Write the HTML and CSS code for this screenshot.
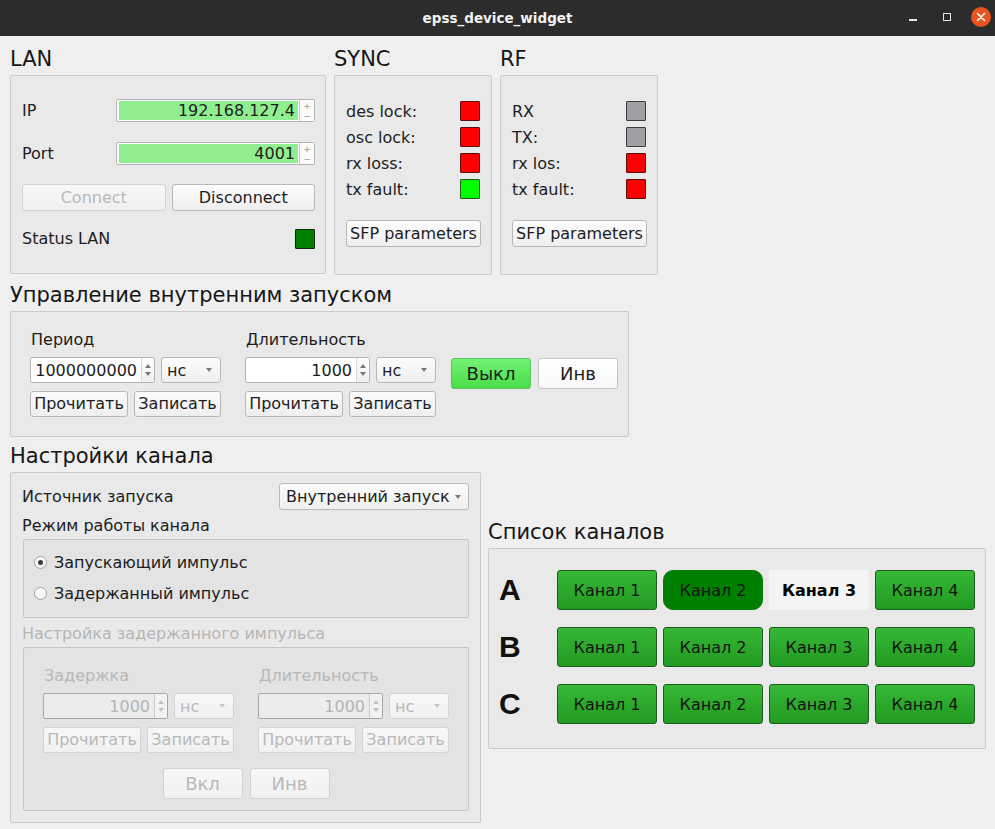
FILE: index.html
```html
<!DOCTYPE html>
<html lang="ru">
<head>
<meta charset="utf-8">
<title>epss_device_widget</title>
<link rel="stylesheet" href="styles.css">
</head>
<body>
<div class="window">
  <header class="titlebar">
    <span class="title">epss_device_widget</span>
    <div class="wm">
      <span class="wm-min"></span>
      <span class="wm-max"></span>
      <span class="wm-close"><svg width="10" height="10" viewBox="0 0 10 10"><path d="M1.5 1.5 L8.5 8.5 M8.5 1.5 L1.5 8.5" stroke="#fff" stroke-width="1.6" stroke-linecap="round"/></svg></span>
    </div>
  </header>

  <main class="main">
    <div class="top-row">
      <section class="lan-col">
        <h2 class="gtitle">LAN</h2>
        <div class="gbox lan-box">
          <div class="lan-row">
            <span class="lan-lbl">IP</span>
            <div class="spin green lan-spin">
              <span class="spin-val">192.168.127.4</span>
              <span class="pm"><span>+</span><span>−</span></span>
            </div>
          </div>
          <div class="lan-row port-row">
            <span class="lan-lbl">Port</span>
            <div class="spin green lan-spin">
              <span class="spin-val">4001</span>
              <span class="pm"><span>+</span><span>−</span></span>
            </div>
          </div>
          <div class="lan-btns">
            <button class="btn disabled lan-btn">Connect</button>
            <button class="btn lan-btn">Disconnect</button>
          </div>
          <div class="status-row">
            <span>Status LAN</span>
            <span class="ind dkgreen"></span>
          </div>
        </div>
      </section>

      <section class="sfp-col">
        <h2 class="gtitle">SYNC</h2>
        <div class="gbox sfp-box">
          <div class="ind-row"><span>des lock:</span><span class="ind red"></span></div>
          <div class="ind-row"><span>osc lock:</span><span class="ind red"></span></div>
          <div class="ind-row"><span>rx loss:</span><span class="ind red"></span></div>
          <div class="ind-row"><span>tx fault:</span><span class="ind lime"></span></div>
          <button class="btn sfp-btn">SFP parameters</button>
        </div>
      </section>

      <section class="sfp-col">
        <h2 class="gtitle">RF</h2>
        <div class="gbox sfp-box">
          <div class="ind-row"><span>RX</span><span class="ind gray"></span></div>
          <div class="ind-row"><span>TX:</span><span class="ind gray"></span></div>
          <div class="ind-row"><span>rx los:</span><span class="ind red"></span></div>
          <div class="ind-row"><span>tx fault:</span><span class="ind red"></span></div>
          <button class="btn sfp-btn">SFP parameters</button>
        </div>
      </section>
    </div>

    <section class="ctrl">
      <h2 class="gtitle">Управление внутренним запуском</h2>
      <div class="gbox ctrl-box">
        <div class="field">
          <div class="flabel">Период</div>
          <div class="frow">
            <div class="spin num-spin">
              <span class="spin-val">1000000000</span>
              <span class="arrows"><i class="up"></i><i class="down"></i></span>
            </div>
            <div class="combo unit"><span>нс</span><i class="caret"></i></div>
          </div>
          <div class="frow brow">
            <button class="btn b-read">Прочитать</button>
            <button class="btn b-write">Записать</button>
          </div>
        </div>
        <div class="field">
          <div class="flabel">Длительность</div>
          <div class="frow">
            <div class="spin num-spin">
              <span class="spin-val">1000</span>
              <span class="arrows"><i class="up"></i><i class="down"></i></span>
            </div>
            <div class="combo unit"><span>нс</span><i class="caret"></i></div>
          </div>
          <div class="frow brow">
            <button class="btn b-read">Прочитать</button>
            <button class="btn b-write">Записать</button>
          </div>
        </div>
        <div class="toggles">
          <button class="btn big on-green">Выкл</button>
          <button class="btn big white">Инв</button>
        </div>
      </div>
    </section>

    <div class="bottom-row">
      <section class="settings">
        <h2 class="gtitle">Настройки канала</h2>
        <div class="gbox settings-box">
          <div class="src-row">
            <span>Источник запуска</span>
            <div class="combo src-combo"><span>Внутренний запуск</span><i class="caret"></i></div>
          </div>
          <div class="sub-lbl">Режим работы канала</div>
          <div class="gbox mode-box">
            <div class="radio"><span class="rdot on"></span>Запускающий импульс</div>
            <div class="radio"><span class="rdot"></span>Задержанный импульс</div>
          </div>
          <div class="sub-lbl dis-text">Настройка задержанного импульса</div>
          <div class="gbox delay-box">
            <div class="delay-fields">
              <div class="field dis">
                <div class="flabel">Задержка</div>
                <div class="frow">
                  <div class="spin num-spin">
                    <span class="spin-val">1000</span>
                    <span class="arrows"><i class="up"></i><i class="down"></i></span>
                  </div>
                  <div class="combo unit"><span>нс</span><i class="caret"></i></div>
                </div>
                <div class="frow brow">
                  <button class="btn b-read">Прочитать</button>
                  <button class="btn b-write">Записать</button>
                </div>
              </div>
              <div class="field dis">
                <div class="flabel">Длительность</div>
                <div class="frow">
                  <div class="spin num-spin">
                    <span class="spin-val">1000</span>
                    <span class="arrows"><i class="up"></i><i class="down"></i></span>
                  </div>
                  <div class="combo unit"><span>нс</span><i class="caret"></i></div>
                </div>
                <div class="frow brow">
                  <button class="btn b-read">Прочитать</button>
                  <button class="btn b-write">Записать</button>
                </div>
              </div>
            </div>
            <div class="delay-toggles">
              <button class="btn big disabled">Вкл</button>
              <button class="btn big disabled">Инв</button>
            </div>
          </div>
        </div>
      </section>

      <section class="channels">
        <h2 class="gtitle">Список каналов</h2>
        <div class="gbox ch-box">
          <div class="ch-row">
            <span class="ch-letter">A</span>
            <button class="ch-btn">Канал 1</button>
            <button class="ch-btn active">Канал 2</button>
            <button class="ch-btn selected">Канал 3</button>
            <button class="ch-btn">Канал 4</button>
          </div>
          <div class="ch-row">
            <span class="ch-letter">B</span>
            <button class="ch-btn">Канал 1</button>
            <button class="ch-btn">Канал 2</button>
            <button class="ch-btn">Канал 3</button>
            <button class="ch-btn">Канал 4</button>
          </div>
          <div class="ch-row">
            <span class="ch-letter">C</span>
            <button class="ch-btn">Канал 1</button>
            <button class="ch-btn">Канал 2</button>
            <button class="ch-btn">Канал 3</button>
            <button class="ch-btn">Канал 4</button>
          </div>
        </div>
      </section>
    </div>
  </main>
</div>
</body>
</html>
```

FILE: styles.css
```css
* { box-sizing: border-box; }

html, body {
  margin: 0;
  padding: 0;
}

body {
  background: #efefef;
  font-family: "DejaVu Sans", "Noto Sans", sans-serif;
  font-size: 16px;
  color: #1d1d1d;
}

.window {
  width: 995px;
  height: 829px;
  overflow: hidden;
}

/* ---------- generic controls ---------- */
.btn {
  font-family: inherit;
  font-size: 16px;
  color: #1d1d1d;
  background: linear-gradient(#fcfcfc, #eeeeee);
  border: 1px solid #b8b8b8;
  border-radius: 3px;
  padding: 0;
  margin: 0;
  height: 26px;
  line-height: 1;
}

.btn.disabled,
.dis .btn {
  color: #b9b9b9;
  border-color: #d3d3d3;
  background: linear-gradient(#f7f7f7, #f0f0f0);
}

.spin {
  display: flex;
  height: 26px;
  border: 1px solid #b5b5b5;
  border-radius: 2px;
  background: #fff;
  overflow: hidden;
}

.spin-val {
  flex: 1;
  text-align: right;
  padding-right: 4px;
  display: flex;
  align-items: center;
  justify-content: flex-end;
}

.spin.green .spin-val {
  background: #90ee90;
  margin: 1px 1px 1px 2px;
  padding-right: 3px;
}

.pm {
  width: 15px;
  display: flex;
  flex-direction: column;
  border-left: 1px solid #c8c8c8;
  background: #fbfbfb;
  font-size: 9px;
  color: #9a9a9a;
  line-height: 10px;
  text-align: center;
  justify-content: center;
}

.arrows {
  width: 13px;
  display: flex;
  flex-direction: column;
  align-items: center;
  justify-content: center;
  gap: 4px;
  border-left: 1px solid #d8d8d8;
  background: linear-gradient(#fdfdfd, #f0f0f0);
}

.arrows .up {
  width: 0;
  height: 0;
  border-left: 3px solid transparent;
  border-right: 3px solid transparent;
  border-bottom: 4px solid #767676;
}

.arrows .down {
  width: 0;
  height: 0;
  border-left: 3px solid transparent;
  border-right: 3px solid transparent;
  border-top: 4px solid #767676;
}

.combo {
  height: 26px;
  display: flex;
  align-items: center;
  justify-content: space-between;
  border: 1px solid #b9b9b9;
  border-radius: 3px;
  background: linear-gradient(#fcfcfc, #efefef);
  padding: 0 8px 0 5px;
}

.caret {
  width: 0;
  height: 0;
  border-left: 3.5px solid transparent;
  border-right: 3.5px solid transparent;
  border-top: 4px solid #7a7a7a;
}

/* ---------- title bar ---------- */
.titlebar {
  height: 36px;
  background: #2c2c2c;
  display: grid;
  grid-template-columns: 1fr auto 1fr;
  align-items: center;
}

.title {
  grid-column: 2;
  color: #f2f2f2;
  font-weight: bold;
  font-size: 13.5px;
}

.wm {
  grid-column: 3;
  justify-self: end;
  display: flex;
  align-items: center;
  height: 36px;
  padding-right: 4px;
}

.wm-min {
  width: 8px;
  height: 1.5px;
  background: #e6e6e6;
  margin-top: 4px;
  margin-right: 26px;
}

.wm-max {
  width: 8px;
  height: 8px;
  border: 1.3px solid #e6e6e6;
  margin-right: 20px;
  margin-top: -2px;
}

.wm-close {
  width: 20px;
  height: 20px;
  border-radius: 50%;
  background: #e95420;
  display: flex;
  align-items: center;
  justify-content: center;
  margin-top: -2px;
}

/* ---------- main layout ---------- */
.main {
  padding: 9px 10px 0 10px;
}

.gtitle {
  margin: 0 0 2px 0;
  font-size: 21px;
  font-weight: normal;
  line-height: 28px;
  color: #161616;
}

.gbox {
  border: 1px solid rgba(0, 0, 0, 0.13);
  border-radius: 2px;
  background: rgba(0, 0, 0, 0.022);
}

.top-row {
  display: flex;
  gap: 8px;
}

/* LAN */
.lan-col { width: 316px; }

.lan-box {
  height: 199px;
  padding: 23px 10px 0 11px;
}

.lan-row {
  display: flex;
  align-items: center;
  height: 23px;
}

.port-row { margin-top: 20px; }

.lan-lbl { width: 94px; }

.lan-spin {
  width: 200px;
  height: 23px;
}

.lan-btns {
  display: flex;
  gap: 6px;
  margin-top: 19px;
}

.btn.lan-btn {
  width: 144px;
  height: 27px;
}

.status-row {
  display: flex;
  justify-content: space-between;
  align-items: center;
  margin-top: 17px;
  height: 21px;
}

/* SYNC / RF */
.sfp-col { width: 158px; }

.sfp-box {
  height: 200px;
  padding: 25px 11px 0 11px;
}

.ind-row {
  display: flex;
  justify-content: space-between;
  align-items: center;
  height: 20px;
  margin-bottom: 6px;
}

.btn.sfp-btn {
  display: block;
  width: 135px;
  height: 27px;
  margin-top: 21px;
  padding: 0;
}

/* indicators */
.ind {
  width: 20px;
  height: 20px;
  border: 1px solid #2e2e2e;
  border-radius: 1px;
  display: inline-block;
}
.ind.red { background: #ff0000; border-color: #5a1010; }
.ind.lime { background: #00ff00; border-color: #1f5a1f; }
.ind.gray { background: #a0a0a4; border-color: #3c3c3c; }
.ind.dkgreen { background: #008000; border-color: #0d2a0d; }

/* ---------- internal launch control ---------- */
.ctrl { margin-top: 6px; width: 619px; }

.ctrl-box {
  display: flex;
  align-items: center;
  padding: 18px 0 19px 19px;
}

.field {
  width: 191px;
  margin-right: 24px;
}

.flabel {
  line-height: 20px;
  height: 20px;
  padding-left: 1px;
}

.frow {
  display: flex;
  gap: 6px;
  margin-top: 7px;
}

.brow { margin-top: 8px; }

.num-spin { width: 125px; }
.unit { width: 60px; }
.b-read { width: 98px; }
.b-write { width: 87px; }

.toggles {
  display: flex;
  gap: 7px;
  margin-left: -9px;
}

.btn.big {
  height: 31px;
  font-size: 18px;
}

.toggles .btn.big { width: 80px; }

.btn.on-green {
  background: linear-gradient(#74f274, #49de49);
  border-color: #5cc25c;
}

.btn.white {
  background: linear-gradient(#ffffff, #f8f8f8);
  border-color: #c6c6c6;
}

/* ---------- channel settings ---------- */
.bottom-row {
  display: flex;
  gap: 7px;
  margin-top: 5px;
}

.settings { width: 471px; }

.settings-box {
  height: 351px;
  padding: 10px 11px 0 11px;
}

.src-row {
  display: flex;
  justify-content: space-between;
  align-items: center;
  height: 27px;
}

.combo.src-combo {
  width: 190px;
  height: 27px;
  padding: 0 7px 0 6px;
}

.sub-lbl {
  line-height: 20px;
  margin-top: 6px;
}

.dis-text { color: #b6b6b6; }

.mode-box {
  margin: 3px 0 0 1px;
  height: 79px;
  padding: 12px 0 0 10px;
}

.radio {
  display: flex;
  align-items: center;
  height: 20px;
  margin-bottom: 11px;
}

.rdot {
  width: 13px;
  height: 13px;
  border: 1px solid #a4a4a4;
  border-radius: 50%;
  background: linear-gradient(#ffffff, #f1f1f1);
  margin-right: 7px;
  display: grid;
  place-items: center;
}

.rdot.on::after {
  content: "";
  width: 5px;
  height: 5px;
  border-radius: 50%;
  background: #3a3a3a;
}

.delay-box {
  margin: 3px 0 0 1px;
  height: 164px;
  padding: 18px 0 0 19px;
}

.delay-fields { display: flex; }

.dis .flabel { color: #b8b8b8; }

.dis .spin {
  background: #ececec;
  border-color: #a8a8a8;
  color: #b4b4b4;
}

.dis .arrows {
  background: #f2f2f2;
  border-left-color: #c8c8c8;
}

.dis .arrows .up { border-bottom-color: #c4c4c4; }
.dis .arrows .down { border-top-color: #c4c4c4; }

.dis .combo {
  color: #b9b9b9;
  border-color: #d3d3d3;
  background: linear-gradient(#f7f7f7, #f0f0f0);
}

.dis .caret { border-top-color: #c8c8c8; }

.delay-toggles {
  display: flex;
  justify-content: center;
  gap: 7px;
  margin: 15px 0 0 -19px;
}

.delay-toggles .btn.big { width: 80px; }

/* ---------- channel list ---------- */
.channels {
  width: 499px;
  align-self: center;
  margin-top: 2px;
}

.ch-box {
  height: 201px;
  padding: 21px 10px 0 10px;
}

.ch-row {
  display: flex;
  align-items: center;
  gap: 6px;
  height: 40px;
  margin-bottom: 17px;
}

.ch-letter {
  width: 52px;
  font-family: "Liberation Sans", Arial, sans-serif;
  font-weight: bold;
  font-size: 30px;
  color: #111;
}

.ch-btn {
  width: 100px;
  height: 40px;
  font-family: inherit;
  font-size: 16px;
  color: #141414;
  background: linear-gradient(#36b836, #229a22);
  border: 1px solid #1c5c1c;
  border-radius: 3px;
  padding: 0;
}

.ch-btn.active {
  background: #007f00;
  border-color: #007f00;
  border-radius: 10px;
}

.ch-btn.selected {
  background: #f4f4f4;
  border-color: #f4f4f4;
  border-radius: 0;
  font-weight: bold;
  color: #000;
}
```
